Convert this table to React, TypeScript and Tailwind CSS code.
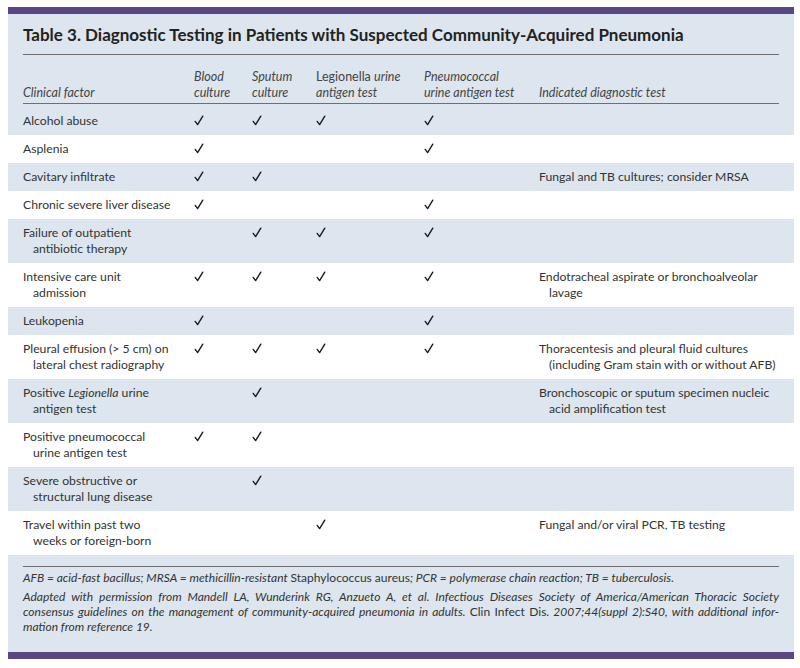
import React from 'react';

// Diagnostic testing table, journal style
type Row = {
  factor: React.ReactNode[];
  checks: [boolean, boolean, boolean, boolean];
  test?: string[];
};

const rows: Row[] = [
  { factor: ['Alcohol abuse'], checks: [true, true, true, true] },
  { factor: ['Asplenia'], checks: [true, false, false, true] },
  { factor: ['Cavitary infiltrate'], checks: [true, true, false, false], test: ['Fungal and TB cultures; consider MRSA'] },
  { factor: ['Chronic severe liver disease'], checks: [true, false, false, true] },
  { factor: ['Failure of outpatient', 'antibiotic therapy'], checks: [false, true, true, true] },
  {
    factor: ['Intensive care unit', 'admission'],
    checks: [true, true, true, true],
    test: ['Endotracheal aspirate or bronchoalveolar', 'lavage'],
  },
  { factor: ['Leukopenia'], checks: [true, false, false, true] },
  {
    factor: ['Pleural effusion (> 5 cm) on', 'lateral chest radiography'],
    checks: [true, true, true, true],
    test: ['Thoracentesis and pleural fluid cultures', '(including Gram stain with or without AFB)'],
  },
  {
    factor: [
      <>
        Positive <i>Legionella</i> urine
      </>,
      'antigen test',
    ],
    checks: [false, true, false, false],
    test: ['Bronchoscopic or sputum specimen nucleic', 'acid amplification test'],
  },
  { factor: ['Positive pneumococcal', 'urine antigen test'], checks: [true, true, false, false] },
  { factor: ['Severe obstructive or', 'structural lung disease'], checks: [false, true, false, false] },
  {
    factor: ['Travel within past two', 'weeks or foreign-born'],
    checks: [false, false, true, false],
    test: ['Fungal and/or viral PCR, TB testing'],
  },
];

function Check() {
  return (
    <svg width="10" height="11" viewBox="0 0 10 11" className="mt-[2px]">
      <path d="M1.2 6.4 L3.6 9.6 L8.8 1.2" fill="none" stroke="#1a1a1a" strokeWidth="1.4" strokeLinecap="round" strokeLinejoin="round" />
    </svg>
  );
}

function Lines({ lines }: { lines?: React.ReactNode[] }) {
  if (!lines) return <div />;
  return (
    <div className="whitespace-nowrap">
      {lines.map((l, i) => (
        <div key={i} className={i > 0 ? 'pl-[10px]' : ''}>
          {l}
        </div>
      ))}
    </div>
  );
}

const cols = 'grid grid-cols-[171px_58px_64px_108px_115px_1fr]';

export default function App() {
  return (
    <div className="bg-white min-h-[668px] pt-[7px] font-['Lato','Liberation_Sans',sans-serif] text-[#333]">
      <div className="ml-[8px] w-[786px] bg-[#dde6ee] border-t-[7px] border-b-[7px] border-[#5a4683]">
        <div className="mx-[15px] pt-[10px] pb-[8px] border-b border-[#6f6f6f]">
          <h1 className="text-[17px] leading-[22px] font-bold text-[#222]">
            Table 3. Diagnostic Testing in Patients with Suspected Community-Acquired Pneumonia
          </h1>
        </div>

        <div className={`mx-[15px] pt-[14px] pb-[2px] border-b border-[#6f6f6f] ${cols} items-end text-[12.5px] leading-[16px] text-[#444]`}>
          <div className="italic">Clinical factor</div>
          <div className="italic">
            Blood
            <br />
            culture
          </div>
          <div className="italic">
            Sputum
            <br />
            culture
          </div>
          <div>
            Legionella <i>urine</i>
            <br />
            <i>antigen test</i>
          </div>
          <div className="italic">
            Pneumococcal
            <br />
            urine antigen test
          </div>
          <div className="italic">Indicated diagnostic test</div>
        </div>

        {rows.map((r, i) => (
          <div
            key={i}
            className={`${cols} pl-[15px] text-[12.2px] leading-[16px] ${i === 0 ? 'pt-[9px] pb-[6px]' : 'py-[6px]'} ${i % 2 === 0 ? 'bg-[#dde6ee]' : 'bg-white'}`}
          >
            <Lines lines={r.factor} />
            {r.checks.map((c, j) => (
              <div key={j}>{c && <Check />}</div>
            ))}
            <Lines lines={r.test} />
          </div>
        ))}

        <div className="px-[15px] pt-[11px] pb-[18px] text-[12px] text-[#333]">
          <div className="border-t border-[#6f6f6f] pt-[4px] leading-[14px] italic">
            AFB = acid-fast bacillus; MRSA = methicillin-resistant <span className="not-italic">Staphylococcus aureus</span>; PCR = polymerase chain reaction; TB = tuberculosis.
          </div>
          <div className="mt-[4px] leading-[15px] italic">
            <div className="text-justify [text-align-last:justify]">
              Adapted with permission from Mandell LA, Wunderink RG, Anzueto A, et al. Infectious Diseases Society of America/American Thoracic Society
            </div>
            <div className="text-justify [text-align-last:justify]">
              consensus guidelines on the management of community-acquired pneumonia in adults. <span className="not-italic">Clin Infect Dis.</span> 2007;44(suppl 2):S40, with additional infor-
            </div>
            <div>mation from reference 19.</div>
          </div>
        </div>
      </div>
    </div>
  );
}
